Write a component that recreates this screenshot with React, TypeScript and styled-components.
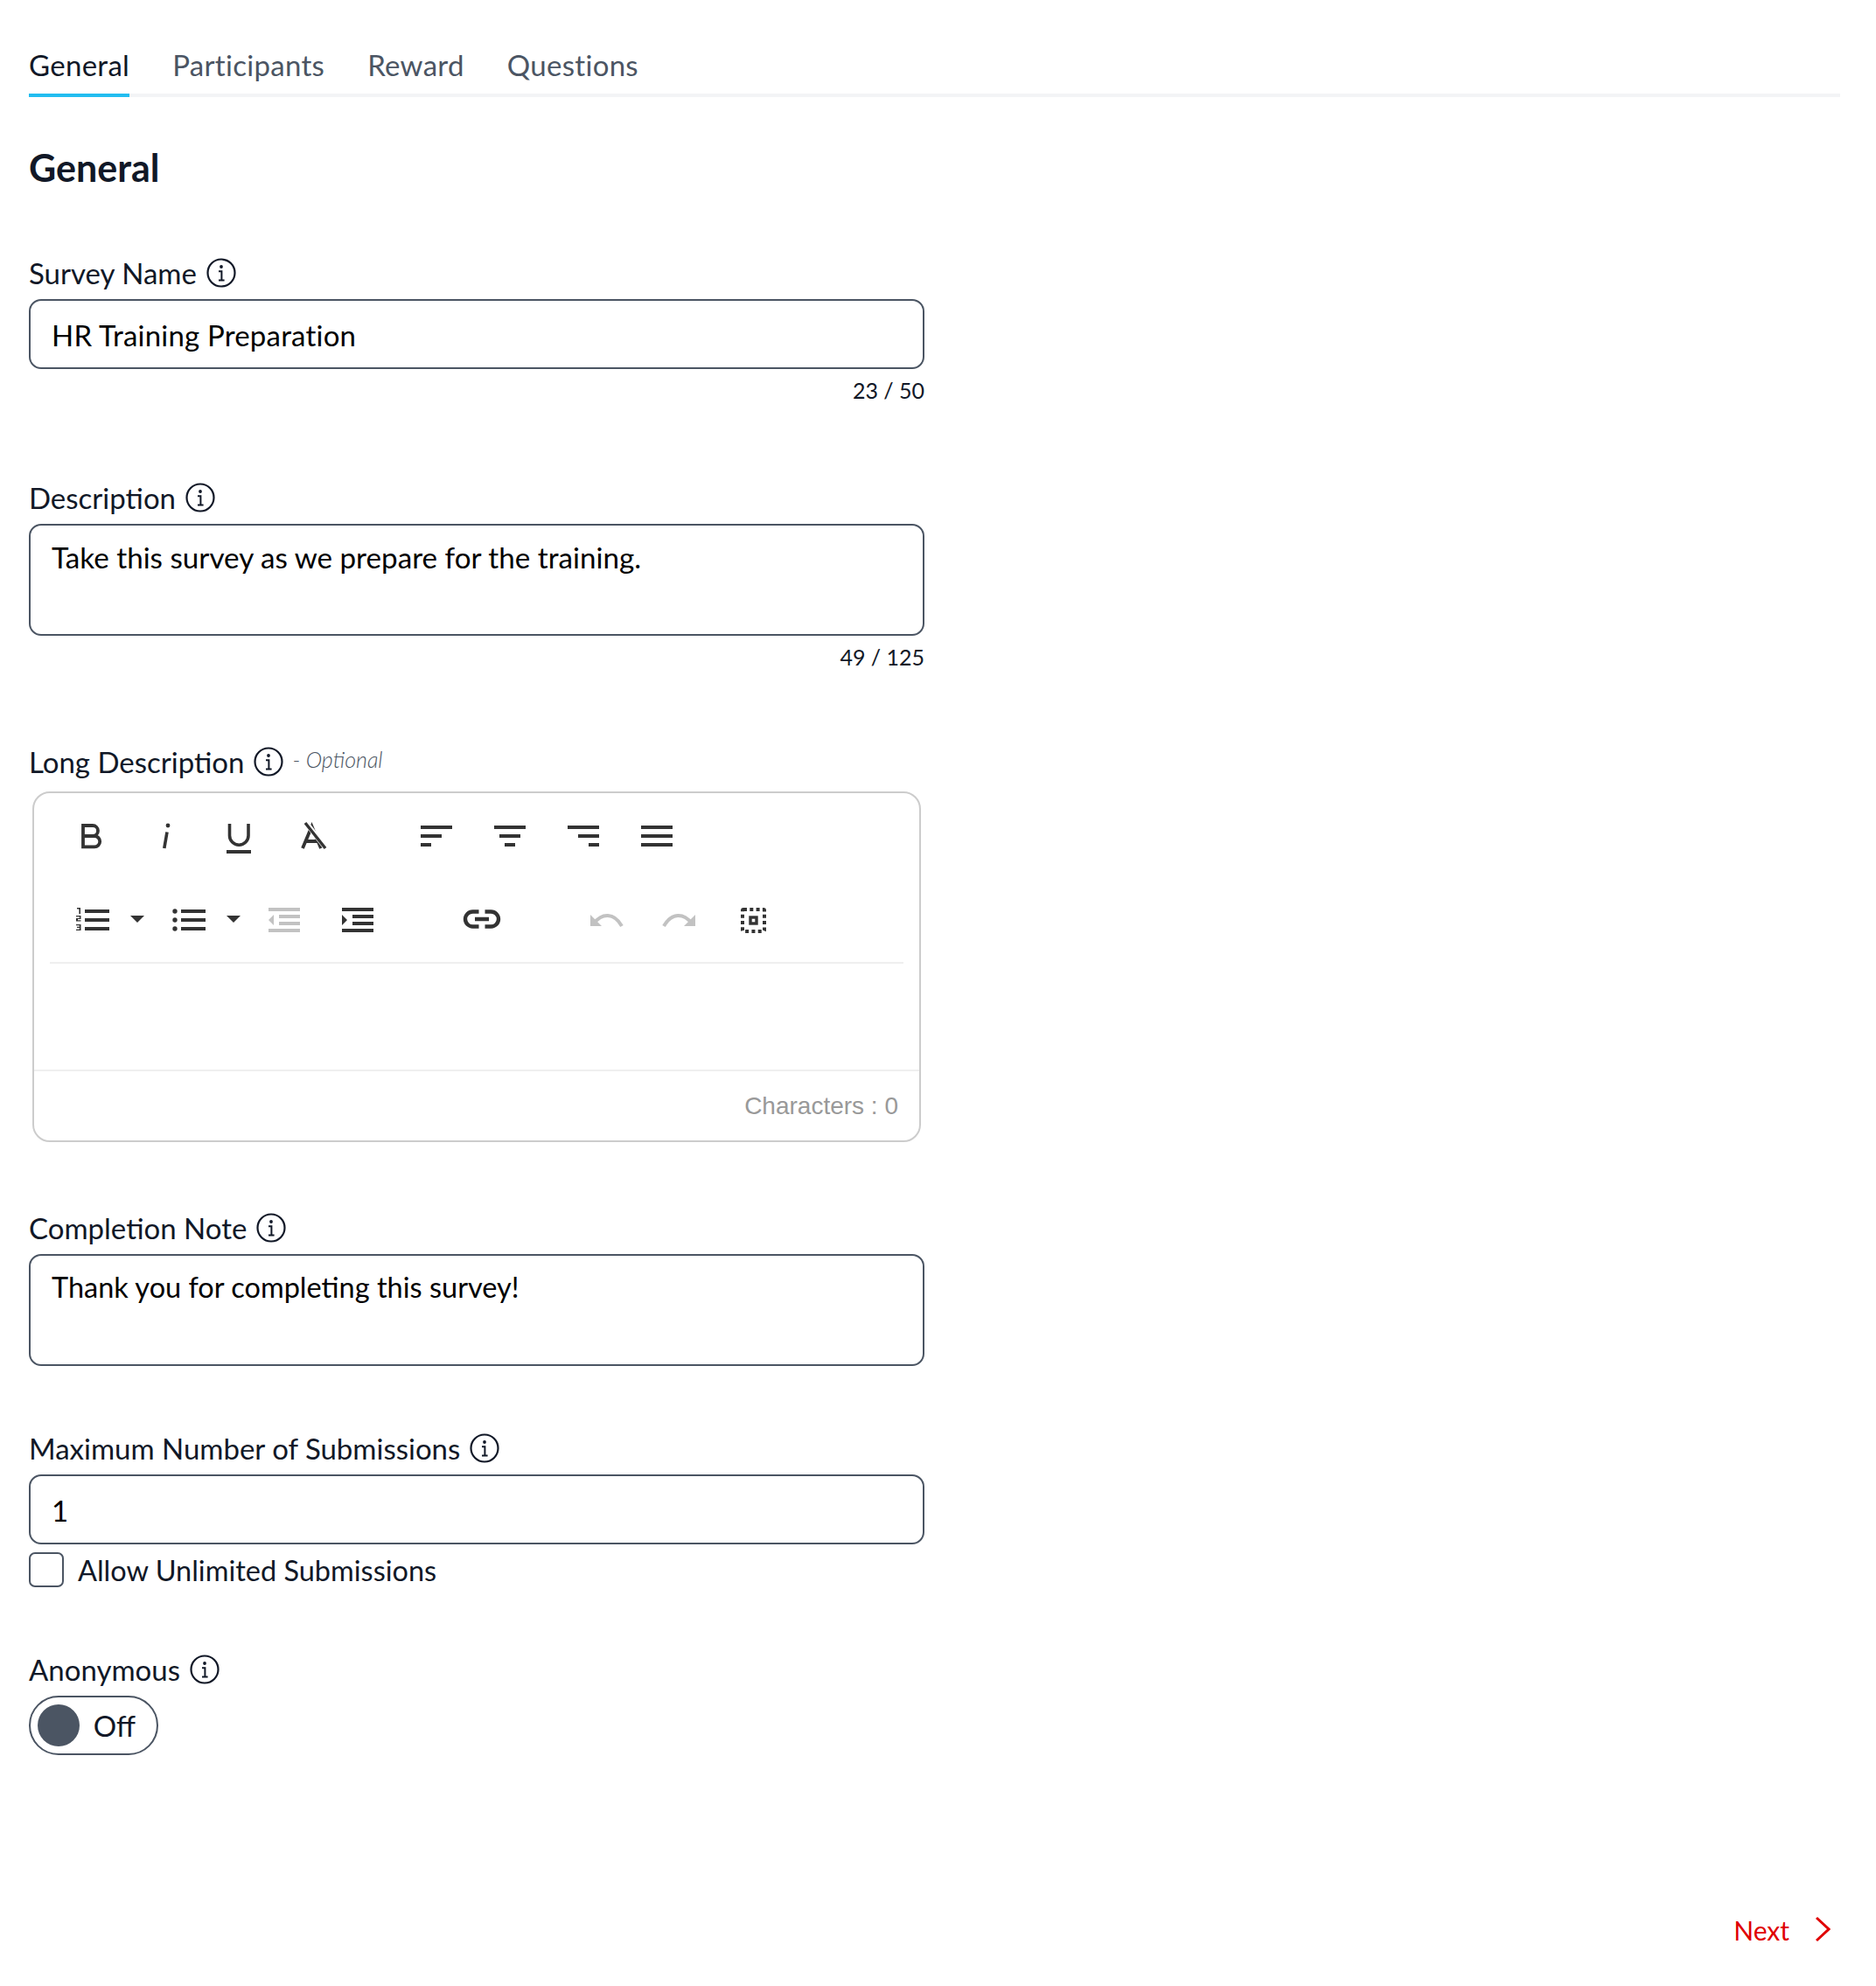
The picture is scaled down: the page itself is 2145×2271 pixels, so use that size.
import React from 'react';
import styled, { createGlobalStyle } from 'styled-components';

const Global = createGlobalStyle`
  html, body { margin: 0; padding: 0; background: #fff; }
  body { font-family: Lato, "Open Sans", sans-serif; color: #111827; }
`;

const Page = styled.div`
  width: 2145px;
  height: 2271px;
  box-sizing: border-box;
  padding: 48px 41px 0 33px;
  display: flex;
  flex-direction: column;
`;
const TabBar = styled.nav`
  display: flex;
  gap: 49px;
  height: 59px;
  box-sizing: content-box;
  border-bottom: 4px solid #f3f4f6;
`;
const Tab = styled.a<{ $active?: boolean }>`
  display: block;
  height: 59px;
  font-size: 33px;
  letter-spacing: 0.3px;
  line-height: 53px;
  color: ${(p) => (p.$active ? '#111827' : '#4b5563')};
  border-bottom: 4px solid ${(p) => (p.$active ? '#22bdf0' : 'transparent')};
`;
const Title = styled.h1`
  margin: 57px 0 76px;
  font-size: 43px;
  line-height: 48px;
  font-weight: 700;
  color: #111827;
`;
const Field = styled.section<{ $gap: number }>`
  width: 1024px;
  margin-bottom: ${(p) => p.$gap}px;
`;
const Label = styled.label`
  display: flex;
  align-items: center;
  height: 40px;
  margin-bottom: 10px;
  font-size: 33px;
  color: #111827;
`;
const InfoIcon = styled.svg`
  width: 34px;
  height: 34px;
  margin-left: 11px;
  flex: none;
`;
const Optional = styled.span`
  margin: -6px 0 0 10px;
  font-size: 25px;
  font-style: italic;
  font-weight: 300;
  color: #4b5563;
`;
const TextInput = styled.input`
  display: block;
  width: 100%;
  height: 80px;
  box-sizing: border-box;
  padding: 2px 24px 0;
  border: 2px solid #4b5563;
  border-radius: 14px;
  font: 33px Lato, sans-serif;
  letter-spacing: 0.2px;
  color: #000;
  outline: none;
`;
const TextArea = styled.textarea<{ $size: number }>`
  display: block;
  width: 100%;
  height: 128px;
  box-sizing: border-box;
  padding: 16px 24px 0;
  border: 2px solid #4b5563;
  border-radius: 14px;
  font: ${(p) => p.$size}px/40px Lato, sans-serif;
  color: #000;
  outline: none;
  resize: none;
`;
const Counter = styled.div`
  margin-top: 6px;
  height: 36px;
  line-height: 36px;
  text-align: right;
  font-size: 25px;
  color: #111827;
`;
const Editor = styled.div`
  width: 1016px;
  height: 401px;
  margin: 14px 0 0 4px;
  box-sizing: border-box;
  border: 2px solid #cccccc;
  border-radius: 20px;
  display: flex;
  flex-direction: column;
`;
const Toolbar = styled.div`
  margin: 0 18px;
  padding: 1px 0 0 6px;
  height: 195px;
  box-sizing: border-box;
  border-bottom: 2px solid #efefef;
`;
const ToolRow = styled.div`
  display: flex;
  height: 95px;
  align-items: center;
`;
const ToolButton = styled.span`
  width: 84px;
  height: 36px;
  flex: none;
  display: flex;
  justify-content: center;
  & > svg { display: block; width: 36px; height: 36px; overflow: visible; }
`;
const Caret = styled.span`
  width: 26px;
  padding-right: 6px;
  box-sizing: border-box;
  flex: none;
  display: flex;
  justify-content: center;
  & > svg { display: block; width: 16px; height: 8px; }
`;
const GroupGap = styled.span`
  width: 58px;
  flex: none;
`;
const EditArea = styled.div`
  flex: 1;
`;
const EditorFooter = styled.div`
  height: 81px;
  box-sizing: border-box;
  border-top: 2px solid #efefef;
  padding-right: 24px;
  text-align: right;
  font: 28px/80px "Liberation Sans", Arial, sans-serif;
  color: #999999;
`;
const CheckRow = styled.label`
  display: flex;
  align-items: center;
  gap: 16px;
  height: 42px;
  margin-top: 8px;
  font-size: 32.5px;
  color: #111827;
`;
const CheckBox = styled.span`
  width: 40px;
  height: 40px;
  box-sizing: border-box;
  border: 2px solid #4b5563;
  border-radius: 7px;
`;
const Toggle = styled.div`
  width: 148px;
  height: 68px;
  box-sizing: border-box;
  padding: 0 24px 0 8px;
  border: 2px solid #4b5563;
  border-radius: 34px;
  display: flex;
  align-items: center;
  justify-content: space-between;
  font-size: 33px;
  color: #111827;
`;
const Knob = styled.span`
  width: 48px;
  height: 48px;
  border-radius: 50%;
  background: #4b5563;
`;
const Footer = styled.footer`
  margin-top: auto;
  height: 85px;
  display: flex;
  justify-content: flex-end;
  align-items: flex-start;
  gap: 29px;
  padding-right: 11px;
  font-size: 30px;
  line-height: 42px;
  color: #e00000;
  & > svg { width: 18px; height: 30px; margin-top: 5px; }
`;

const Info = () => (
  <InfoIcon viewBox="0 0 34 34" fill="none" stroke="#111827">
    <circle cx="17" cy="17" r="15.5" strokeWidth="2.2" />
    <circle cx="17" cy="10" r="1.9" fill="#111827" stroke="none" />
    <path d="M14 15.2h3.4V25M14 25.5h6.6" strokeWidth="2" />
  </InfoIcon>
);

const D = '#333333';
const G = '#c2c2c2';
const Bars = ({ w, align }: { w: number[]; align: 'l' | 'c' | 'r' }) => (
  <svg viewBox="0 0 36 36" fill={D}>
    {w.map((v, i) => (
      <rect key={i} y={6 + i * 10} height={4} width={v} x={align === 'l' ? 0 : align === 'c' ? (36 - v) / 2 : 36 - v} />
    ))}
  </svg>
);
const CaretIcon = () => (
  <Caret>
    <svg viewBox="0 0 16 8" fill={D}><path d="M0 0h16l-8 8z" /></svg>
  </Caret>
);

export default function App() {
  return (
    <Page>
      <Global />
      <TabBar>
        <Tab $active>General</Tab>
        <Tab>Participants</Tab>
        <Tab>Reward</Tab>
        <Tab>Questions</Tab>
      </TabBar>
      <Title>General</Title>

      <Field $gap={85}>
        <Label>Survey Name<Info /></Label>
        <TextInput readOnly value="HR Training Preparation" />
        <Counter>23 / 50</Counter>
      </Field>
      <Field $gap={82}>
        <Label>Description<Info /></Label>
        <TextArea $size={33.2} readOnly value="Take this survey as we prepare for the training." />
        <Counter>49 / 125</Counter>
      </Field>
      <Field $gap={78}>
        <Label>Long Description<Info /><Optional>- Optional</Optional></Label>
        <Editor>
          <Toolbar>
            <ToolRow>
              <ToolButton>
                <svg viewBox="0 0 36 36" fill="none" stroke={D} strokeWidth="3.8">
                  <path d="M8 6H19a6 6 0 0 1 0 12H8ZM8 18H21a6.2 6.2 0 0 1 0 12.4H8Z" />
                </svg>
              </ToolButton>
              <ToolButton>
                <svg viewBox="0 0 36 36" fill="none" stroke={D}>
                  <circle cx="21" cy="6" r="2.4" fill={D} stroke="none" />
                  <path d="M20 13.5L16.8 32" strokeWidth="3.6" />
                </svg>
              </ToolButton>
              <ToolButton>
                <svg viewBox="0 0 36 36" fill="none" stroke={D} strokeWidth="3.6">
                  <path d="M7.5 4V17.5A10.75 10.75 0 0 0 29 17.5V4" />
                  <rect x="4" y="34" width="28" height="4" fill={D} stroke="none" />
                </svg>
              </ToolButton>
              <ToolButton>
                <svg viewBox="0 0 36 36" fill="none" stroke={D} strokeWidth="3.8">
                  <path d="M7 32L17.5 7L28 32M11 24H25" />
                  <path d="M11 3L33 31" stroke="#fff" strokeWidth="6" />
                  <path d="M10 3L33 32" strokeWidth="3.4" />
                </svg>
              </ToolButton>
              <GroupGap />
              <ToolButton><Bars w={[36, 24, 12]} align="l" /></ToolButton>
              <ToolButton><Bars w={[36, 24, 12]} align="c" /></ToolButton>
              <ToolButton><Bars w={[36, 24, 12]} align="r" /></ToolButton>
              <ToolButton><Bars w={[36, 36, 36]} align="l" /></ToolButton>
            </ToolRow>
            <ToolRow>
              <ToolButton>
                <svg viewBox="0 0 36 36" fill={D}>
                  <path d="M10 7h28v4H10zM10 17h28v4H10zM10 27h28v4H10z" />
                  <path d="M1 5h4v7H3.400V6.600H1zM0 14h5.500v4H2v1.200h3.500v1.300H0V17h3.800v-1.700H0zM0 24h5.500v7H0v-1.300h3.800v-1.600H1v-1.300h2.800v-1.500H0z" />
                </svg>
              </ToolButton>
              <CaretIcon />
              <ToolButton>
                <svg viewBox="0 0 36 36" fill={D}>
                  <path d="M10 7h28v4H10zM10 17h28v4H10zM10 27h28v4H10z" />
                  <circle cx="3" cy="9" r="2.700" /><circle cx="3" cy="19" r="2.700" /><circle cx="3" cy="29" r="2.700" />
                </svg>
              </ToolButton>
              <CaretIcon />
              <ToolButton>
                <svg viewBox="0 0 36 36" fill={G}>
                  <path d="M0 5h36v4H0zM12 13h24v4H12zM12 21h24v4H12zM0 29h36v4H0zM0 19l6-6v12z" />
                </svg>
              </ToolButton>
              <ToolButton>
                <svg viewBox="0 0 36 36" fill={D}>
                  <path d="M0 5h36v4H0zM12 13h24v4H12zM12 21h24v4H12zM0 29h36v4H0zM6 19l-6-6v12z" />
                </svg>
              </ToolButton>
              <GroupGap />
              <ToolButton>
                <svg viewBox="0 0 36 36" fill="none" stroke="#333" strokeWidth="4.4">
                  <path d="M14.500 9.500H7.500a8.500 8.500 0 0 0 0 17H14.500M21.500 9.500H28.500a8.500 8.500 0 0 1 0 17H21.500M10 18H26" />
                </svg>
              </ToolButton>
              <GroupGap />
              <ToolButton>
                <svg viewBox="0 0 36 36" fill="none" stroke={G} strokeWidth="4">
                  <path d="M4 23C13 11 27 10 36 26" />
                  <path d="M0 13V26H13Z" fill={G} stroke="none" />
                </svg>
              </ToolButton>
              <ToolButton>
                <svg viewBox="0 0 36 36" fill="none" stroke={G} strokeWidth="4">
                  <path d="M32 23C23 11 9 10 0 26" />
                  <path d="M36 13V26H23Z" fill={G} stroke="none" />
                </svg>
              </ToolButton>
              <ToolButton>
                <svg viewBox="0 0 36 36" fill="none" stroke={D}>
                  <rect x="6" y="7" width="25" height="25" rx="1" strokeWidth="4" strokeDasharray="4 3.300" />
                  <rect x="15" y="16" width="7" height="7" strokeWidth="3.400" />
                </svg>
              </ToolButton>
            </ToolRow>
          </Toolbar>
          <EditArea />
          <EditorFooter>Characters : 0</EditorFooter>
        </Editor>
      </Field>
      <Field $gap={74}>
        <Label>Completion Note<Info /></Label>
        <TextArea $size={32.5} readOnly value="Thank you for completing this survey!" />
      </Field>
      <Field $gap={73}>
        <Label>Maximum Number of Submissions<Info /></Label>
        <TextInput readOnly value="1" />
        <CheckRow><CheckBox />Allow Unlimited Submissions</CheckRow>
      </Field>
      <Field $gap={0}>
        <Label>Anonymous<Info /></Label>
        <Toggle><Knob />Off</Toggle>
      </Field>
      <Footer>
        Next
        <svg viewBox="0 0 18 30" fill="none" stroke="#e00000" strokeWidth="3"><path d="M2 2l14 13L2 28" /></svg>
      </Footer>
    </Page>
  );
}
